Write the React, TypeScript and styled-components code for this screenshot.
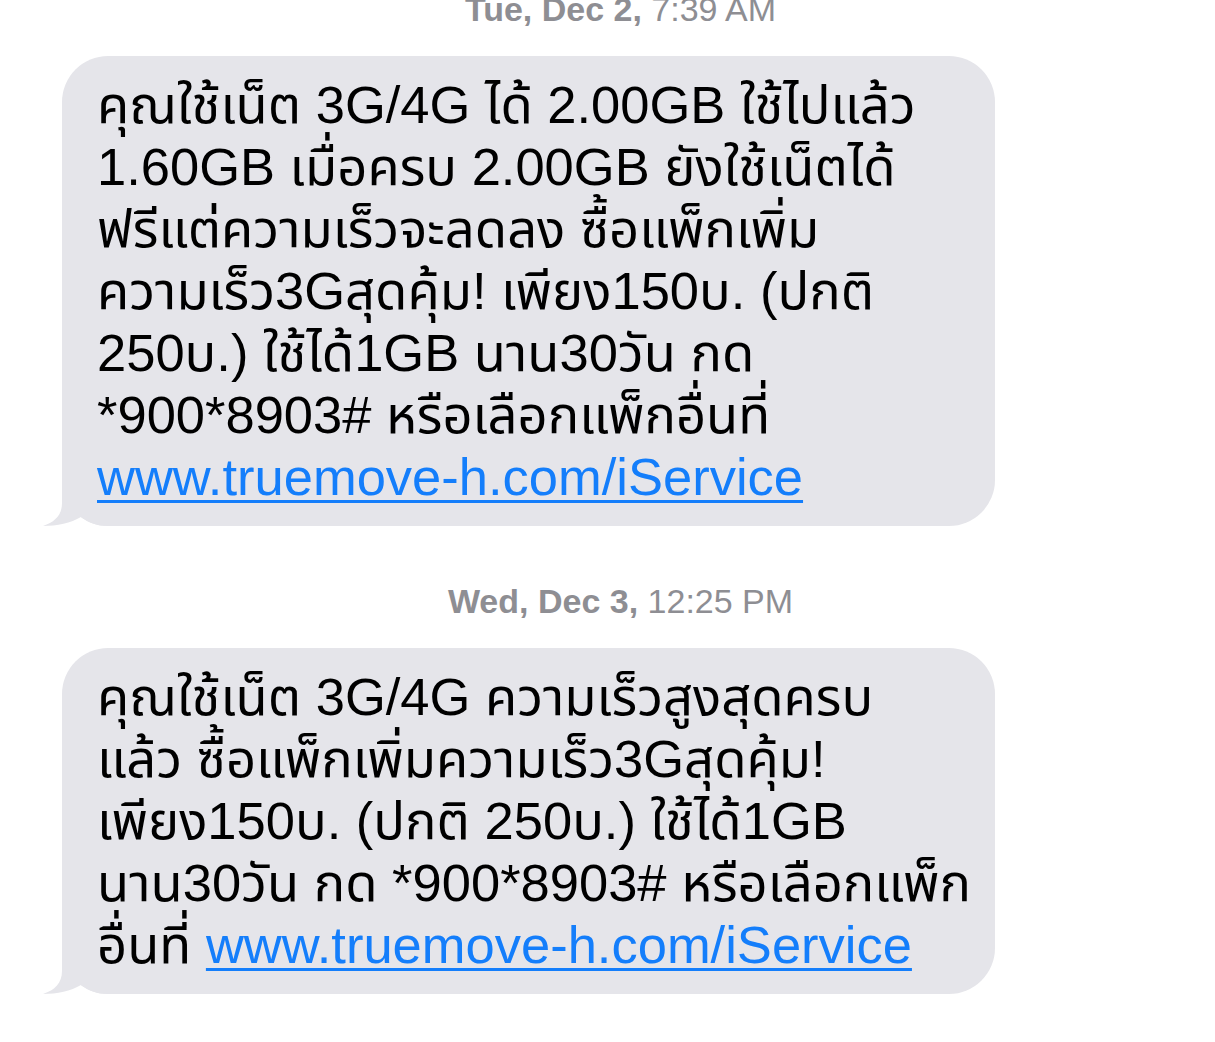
import React from 'react'
import styled, { createGlobalStyle } from 'styled-components'

const Global = createGlobalStyle`
html, body {
  margin: 0;
  padding: 0;
  background: #ffffff;
}
body {
  width: 1215px;
  height: 1042px;
  overflow: hidden;
  font-family: "Liberation Sans", "Noto Sans Thai", "Loma", "Garuda", "DejaVu Sans", sans-serif;
}
`

type Part = { text: string; link?: boolean }
type Msg = { day: string; time: string; lines: Part[][] }

const URL = 'www.truemove-h.com/iService'

const messages: Msg[] = [
  {
    day: 'Tue, Dec 2,',
    time: '7:39 AM',
    lines: [
      [{ text: 'คุณใช้เน็ต 3G/4G ได้ 2.00GB ใช้ไปแล้ว' }],
      [{ text: '1.60GB เมื่อครบ 2.00GB ยังใช้เน็ตได้' }],
      [{ text: 'ฟรีแต่ความเร็วจะลดลง ซื้อแพ็กเพิ่ม' }],
      [{ text: 'ความเร็ว3Gสุดคุ้ม! เพียง150บ. (ปกติ' }],
      [{ text: '250บ.) ใช้ได้1GB นาน30วัน กด' }],
      [{ text: '*900*8903# หรือเลือกแพ็กอื่นที่' }],
      [{ text: URL, link: true }],
    ],
  },
  {
    day: 'Wed, Dec 3,',
    time: '12:25 PM',
    lines: [
      [{ text: 'คุณใช้เน็ต 3G/4G ความเร็วสูงสุดครบ' }],
      [{ text: 'แล้ว ซื้อแพ็กเพิ่มความเร็ว3Gสุดคุ้ม!' }],
      [{ text: 'เพียง150บ. (ปกติ 250บ.) ใช้ได้1GB' }],
      [{ text: 'นาน30วัน กด *900*8903# หรือเลือกแพ็ก' }],
      [{ text: 'อื่นที่ ' }, { text: URL, link: true }],
    ],
  },
]

const Tail = () => (
  <TailSvg width="66" height="45" viewBox="0 0 66 45">
    <path
      d="M19 0 L19 22 C19 34 12 41 0 45 C14 45 28 42 38 36 C46 42 54 45 66 45 L66 0 Z"
      fill="#e5e5ea"
    />
  </TailSvg>
)

const App = () => {
  return (
    <Page>
      <Global />
      {messages.map((m, i) => (
        <Thread key={i} first={i === 0}>
          <Stamp>
            <b>{m.day}</b> {m.time}
          </Stamp>
          <Bubble>
            {m.lines.map((line, j) => (
              <Line key={j}>
                {line.map((p, k) =>
                  p.link ? <Link key={k}>{p.text}</Link> : <span key={k}>{p.text}</span>
                )}
              </Line>
            ))}
            <Tail />
          </Bubble>
        </Thread>
      ))}
    </Page>
  )
}

export default App

const Page = styled.div`
width: 1215px;
height: 1042px;
display: flex;
flex-direction: column;
background: #ffffff;
`

const Thread = styled.div<{ first: boolean }>`
display: flex;
flex-direction: column;
align-items: flex-start;
margin-top: ${(p) => (p.first ? '-11px' : '55px')};
`

const Stamp = styled.div`
align-self: stretch;
box-sizing: border-box;
padding-left: 26px;
text-align: center;
font-family: "Liberation Sans", Arial, sans-serif;
font-size: 34px;
line-height: 40px;
color: #8e8e93;
b {
  font-weight: 700;
}
`

const Bubble = styled.div`
position: relative;
box-sizing: border-box;
width: 933px;
margin: 27px 0 0 62px;
padding: 18px 20px 18px 35px;
background: #e5e5ea;
border-radius: 46px;
color: #000000;
font-size: 52.5px;
line-height: 62px;
`

const Line = styled.div`
position: relative;
z-index: 1;
white-space: nowrap;
`

const Link = styled.span`
color: #147efb;
text-decoration: underline;
text-decoration-thickness: 3px;
text-underline-offset: 5px;
`

const TailSvg = styled.svg`
position: absolute;
left: -19px;
bottom: 0;
display: block;
`
